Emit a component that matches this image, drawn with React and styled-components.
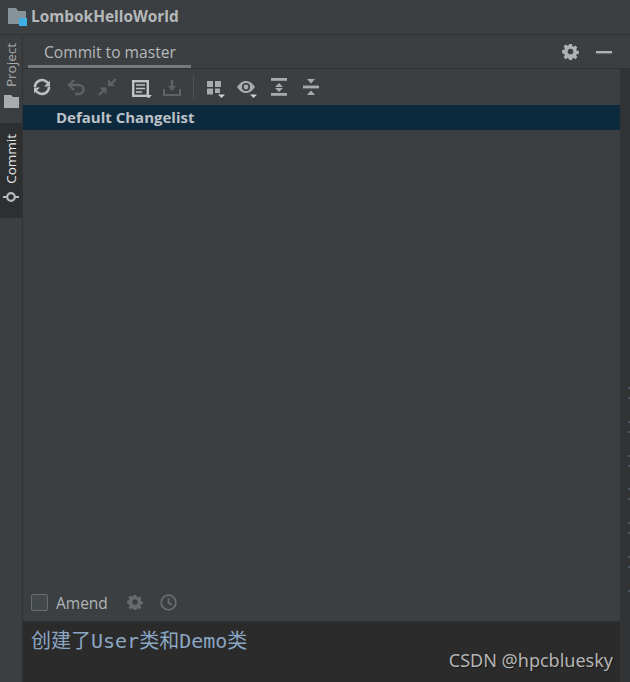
import React from "react";
import styled, { createGlobalStyle } from "styled-components";

const Global = createGlobalStyle`
  html, body { margin: 0; padding: 0; background: #3c3f41; }
  body { width: 630px; height: 682px; overflow: hidden; font-family: "Open Sans", "Noto Sans", sans-serif; }
`;

const Page = styled.div`
  width: 630px; height: 682px; display: flex; flex-direction: column;
  background: #3c3f41; color: #bbbbbb; position: relative; overflow: hidden;
`;
const TitleBar = styled.header`
  height: 34px; flex: none; display: flex; align-items: center; gap: 4px; padding: 0 0 1px 8px; box-sizing: border-box;
  box-shadow: 0 1px 0 #323232;
`;
const ProjectName = styled.span`
  font: 700 15.4px "Open Sans", sans-serif; color: #b4b8ba;
`;
const Body = styled.div`flex: 1; display: flex; min-height: 0; margin-top: 1px;`;
const Stripe = styled.nav`
  width: 22px; flex: none; display: flex; flex-direction: column; border-right: 1px solid #323232;
`;
const StripeTab = styled.div`
  height: ${p => p.$h}px; display: flex; flex-direction: column; align-items: center;
  gap: ${p => p.$gap}px; padding-top: ${p => p.$pt}px; box-sizing: border-box;
  background: ${p => p.$active ? "#2d2f30" : "transparent"};
  color: ${p => p.$active ? "#e6e8ea" : "#a8acae"};
`;
const StripeLabel = styled.span`
  writing-mode: vertical-rl; transform: rotate(180deg);
  font: 400 13.5px "Open Sans", sans-serif; line-height: 22px; width: 22px; text-align: center;
`;
const Main = styled.main`flex: 1; min-width: 0; display: flex; flex-direction: column;`;
const Content = styled.div`flex: 1; min-height: 0; display: flex;`;
const Panel = styled.section`flex: 1; min-width: 0; display: flex; flex-direction: column;`;
const RightStrip = styled.aside`width: 10px; flex: none; background: #313335; position: relative;`;
const PanelHeader = styled.div`
  height: 33px; flex: none; display: flex; align-items: stretch; justify-content: space-between;
  border-bottom: 1px solid #323232; box-sizing: content-box;
`;
const Tab = styled.div`
  margin-left: 5px; width: 163px; box-sizing: border-box; padding: 7px 0 0 16px;
  font: 400 15.6px "Open Sans", sans-serif; color: #b4b8ba; border-bottom: 3px solid #747a80; line-height: 20px;
  white-space: nowrap;
`;
const HeaderActions = styled.div`display: flex; align-items: center; gap: 17px; padding-right: 18px;`;
const Toolbar = styled.div`
  height: 36px; flex: none; display: flex; align-items: center; padding-left: 8px; box-sizing: border-box;
`;
const ToolIcon = styled.span`
  width: 22px; height: 22px; flex: none; margin-right: ${p => p.$mr ?? 10}px; display: block;
  svg { display: block; }
`;
const Sep = styled.span`width: 1px; height: 24px; background: #515151; margin: 0 10px 0 0; flex: none;`;
const ChangeRow = styled.div`
  height: 25px; flex: none; background: #0d293e; display: flex; align-items: center; padding: 0 0 2px 33px; box-sizing: border-box;
  font: 700 15px "Open Sans", sans-serif; color: #bcc2c6;
`;
const Spacer = styled.div`flex: 1;`;
const AmendRow = styled.div`
  height: 31px; flex: none; display: flex; align-items: center; padding: 0 0 6px 8px; box-sizing: border-box;
`;
const Check = styled.span`
  width: 15px; height: 15px; border: 1px solid #6b6b6b; border-radius: 2px; background: #43494a; flex: none;
`;
const AmendLabel = styled.span`
  font: 400 15.5px "Open Sans", sans-serif; color: #b0b4b6; margin: 0 19px 0 8px;
`;
const SmallIcon = styled.span`height: 17px; margin-right: 17px; flex: none; display: block; svg { display: block; }`;
const Editor = styled.div`
  height: 61px; flex: none; background: #2b2b2b; padding: 6px 0 0 8px; box-sizing: border-box;
  border-top: 1px solid #323232;
  font: 400 20px/26px "DejaVu Sans Mono", "Noto Sans CJK SC", monospace; color: #8ba6c2; white-space: pre;
`;
const Watermark = styled.div`
  position: absolute; right: 17px; top: 650px; font: 400 18px/20px "Noto Sans", sans-serif;
  color: #b4b4b4; text-shadow: 1px 1px 1px #1c1c1c;
`;
const Tick = styled.i`
  position: absolute; right: 0; top: ${p => p.$t}px; width: 2px; height: 2px; background: #4a5764;
`;

const G = "#afb1b3", D = "#5f6163", M = "#a8aaac";

const Gear = ({ c = G, s = 17 }) => (
  <svg width={s} height={s} viewBox="0 0 18 18">
    <path fill={c} fillRule="evenodd" d="M7.500 1h3l.4 2.300 1.300.6 2-1.300 2.100 2.100-1.300 2 .6 1.300 2.300.4v3l-2.300.4-.6 1.300 1.300 2-2.100 2.100-2-1.300-1.300.6-.4 2.300h-3l-.4-2.300-1.300-.6-2 1.300-2.100-2.100 1.300-2-.6-1.300L.1 10.500v-3l2.300-.4.6-1.300-1.300-2 2.100-2.100 2 1.300 1.300-.6zM9 6a3 3 0 1 0 0 6 3 3 0 0 0 0-6z" />
  </svg>
);
const Caret = ({ x = 14, y = 18, c = "#c4c6c8" }) => <path d={`M${x} ${y}h7l-3.500 3.500z`} fill={c} />;

const TICKS = [387, 397, 421, 431, 455, 465, 488, 498, 522, 532, 556, 566, 590];

export default function App() {
  return (
    <Page>
      <Global />
      <TitleBar>
        <svg width="19" height="18" viewBox="0 0 19 18">
          <path d="M0 0h8l2 3h8v13H0z" fill="#87939a" />
          <rect x="11" y="10" width="8" height="8" fill="#3fb0e3" />
        </svg>
        <ProjectName>LombokHelloWorld</ProjectName>
      </TitleBar>
      <Body>
        <Stripe>
          <StripeTab $h={88} $pt={8} $gap={8}>
            <StripeLabel>Project</StripeLabel>
            <svg width="15" height="13" viewBox="0 0 15 13"><path d="M0 0h7l2 2h6v11H0z" fill="#a8acae" /></svg>
          </StripeTab>
          <StripeTab $h={95} $active $pt={11} $gap={7}>
            <StripeLabel>Commit</StripeLabel>
            <svg width="18" height="12" viewBox="0 0 18 12">
              <circle cx="9" cy="6" r="3.800" fill="none" stroke="#b8babc" strokeWidth="2.200" />
              <path d="M1 6h4M13 6h4" stroke="#b8babc" strokeWidth="2.200" />
            </svg>
          </StripeTab>
        </Stripe>
        <Main>
          <PanelHeader>
            <Tab>Commit to master</Tab>
            <HeaderActions>
              <Gear />
              <svg width="16" height="4" viewBox="0 0 16 4"><rect y="1" width="16" height="2.400" fill={G} /></svg>
            </HeaderActions>
          </PanelHeader>
          <Content>
            <Panel>
              <Toolbar>
                <ToolIcon $mr={12}>
                  <svg width="22" height="22" viewBox="0 0 22 22" fill="none" stroke="#bcbec0" strokeWidth="2.600">
                    <path d="M4 11a7 7 0 0 1 11.500-5.300l1.500 1.500" />
                    <path d="M18 11a7 7 0 0 1-11.500 5.300l-1.500-1.500" />
                    <path d="M19 4.500v6h-6z M3 17.500v-6h6z" fill="#bcbec0" stroke="none" />
                  </svg>
                </ToolIcon>
                <ToolIcon $mr={9}>
                  <svg width="22" height="22" viewBox="0 0 22 22" fill="none" stroke={D} strokeWidth="2.400">
                    <path d="M5 9h9a4.500 4.500 0 0 1 0 9h-4" />
                    <path d="M9 4 4 9l5 5" />
                  </svg>
                </ToolIcon>
                <ToolIcon $mr={12}>
                  <svg width="22" height="22" viewBox="0 0 22 22" fill={D}>
                    <path d="M10.500 11.500v7l-7-7z" />
                    <path d="M12 10V3l7 7z" />
                    <path d="M7.500 14.500l-4.500 4.500M15.500 7.500L20 3" stroke={D} strokeWidth="2.400" />
                  </svg>
                </ToolIcon>
                <ToolIcon $mr={9}>
                  <svg width="22" height="22" viewBox="0 0 22 22">
                    <rect x="3.200" y="5.200" width="14.600" height="14.600" fill="none" stroke="#c0c2c4" strokeWidth="2.400" />
                    <path d="M6 9h9M6 12.500h9M6 16h6" stroke="#c0c2c4" strokeWidth="1.500" />
                    <Caret x={15} y={19} />
                  </svg>
                </ToolIcon>
                <ToolIcon>
                  <svg width="22" height="22" viewBox="0 0 22 22" fill="none" stroke={D} strokeWidth="2">
                    <path d="M3 13v6h16v-6" />
                    <path d="M11 4v9" strokeWidth="2.400" />
                    <path d="M7 10h8l-4 5z" fill={D} stroke="none" />
                  </svg>
                </ToolIcon>
                <Sep />
                <ToolIcon>
                  <svg width="22" height="22" viewBox="0 0 22 22" fill={M}>
                    <rect x="3" y="5" width="6" height="6" rx="0.500" />
                    <rect x="11" y="5" width="6" height="6" rx="0.500" />
                    <rect x="3" y="12.500" width="6" height="6" rx="0.500" />
                    <rect x="11" y="12.500" width="5" height="4.500" rx="0.500" />
                    <Caret x={14} y={18.500} c="#d0d2d4" />
                  </svg>
                </ToolIcon>
                <ToolIcon>
                  <svg width="22" height="22" viewBox="0 0 22 22">
                    <path d="M1 11c3-4.500 6-6 9-6s6 1.500 9 6c-3 4.500-6 6-9 6s-6-1.500-9-6z" fill={M} />
                    <circle cx="10" cy="11" r="4" fill="#3c3f41" />
                    <circle cx="10" cy="11" r="2.400" fill={M} />
                    <Caret x={14} y={18.500} c="#d0d2d4" />
                  </svg>
                </ToolIcon>
                <ToolIcon>
                  <svg width="22" height="22" viewBox="0 0 22 22" fill={M}>
                    <rect x="3" y="2" width="16" height="2.800" />
                    <rect x="3" y="17" width="16" height="2.800" />
                    <path d="M7 11l4-4 4 4zM7 12l4 4 4-4z" />
                  </svg>
                </ToolIcon>
                <ToolIcon $mr={0}>
                  <svg width="22" height="22" viewBox="0 0 22 22" fill={M}>
                    <rect x="3" y="9.600" width="16" height="2.800" />
                    <path d="M7 3h8l-4 4.500zM7 19h8l-4-4.500z" />
                  </svg>
                </ToolIcon>
              </Toolbar>
              <ChangeRow>Default Changelist</ChangeRow>
              <Spacer />
              <AmendRow>
                <Check />
                <AmendLabel>Amend</AmendLabel>
                <SmallIcon><Gear c="#686a6c" s={16} /></SmallIcon>
                <SmallIcon>
                  <svg width="17" height="17" viewBox="0 0 18 18" fill="none" stroke="#6a6c6e" strokeWidth="1.800">
                    <circle cx="9" cy="9" r="7.800" />
                    <path d="M9 4.500V9.500l3.500 2" />
                  </svg>
                </SmallIcon>
              </AmendRow>
              <Editor>创建了User类和Demo类</Editor>
            </Panel>
            <RightStrip>
              {TICKS.map(t => <Tick key={t} $t={t - 69} />)}
            </RightStrip>
          </Content>
        </Main>
      </Body>
      <Watermark>CSDN @hpcbluesky</Watermark>
    </Page>
  );
}
